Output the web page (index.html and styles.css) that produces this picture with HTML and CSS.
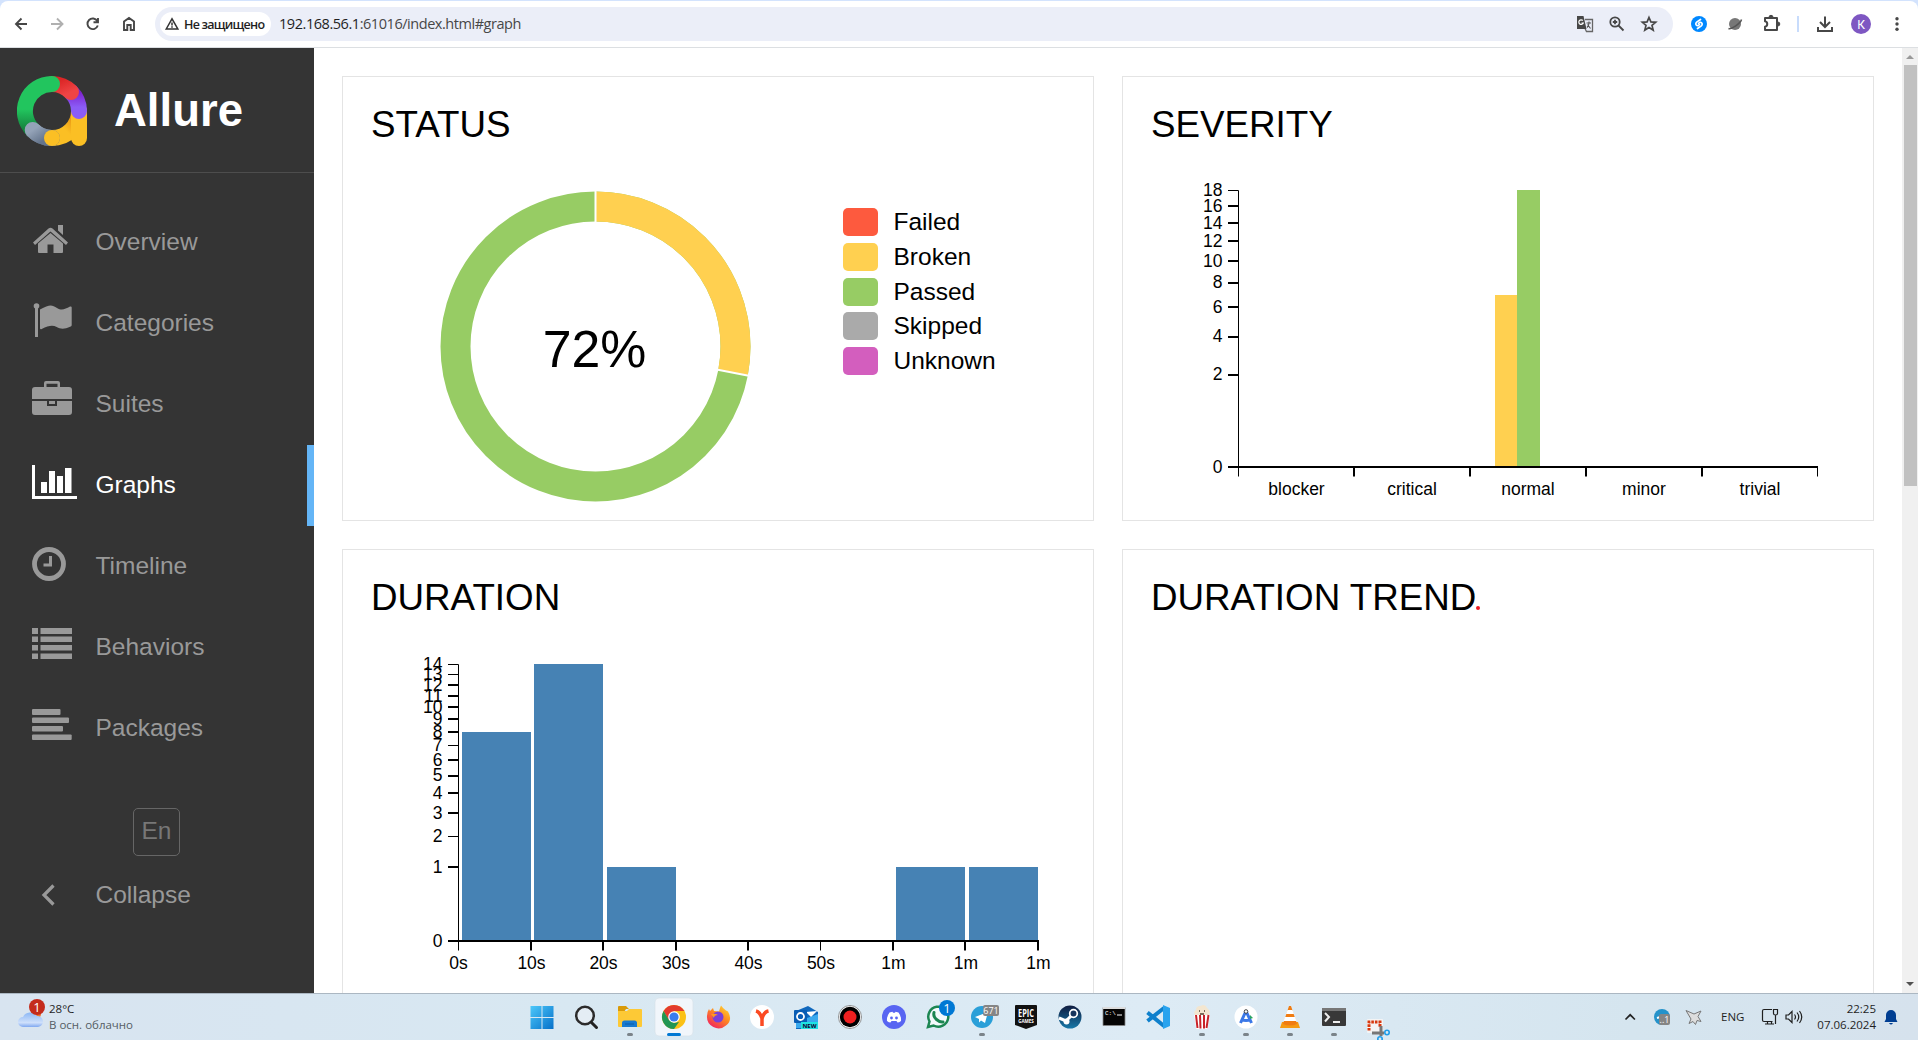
FILE: index.html
```html
<!DOCTYPE html>
<html lang="en">
<head>
<meta charset="utf-8">
<title>Allure Report</title>
<link rel="stylesheet" href="styles.css">
</head>
<body>
<div class="screen">
<header class="toolbar-wrap">
<div class="toolbar">
  <svg class="nav-buttons" width="155" height="46" viewBox="0 1 155 46" fill="none" stroke="#474747" stroke-width="1.9">
    <path d="M27 24H16M21.500 18.500L16 24l5.500 5.500"/>
    <path stroke="#b0b0b0" d="M51 24h11M57 18.500L62.500 24L57 29.500"/>
    <path d="M97.300 21a5.300 5.300 0 1 0 .5 4.500M98 18v4.300h-4.500"/>
    <path d="M124 30V21.500L129 18l5 3.500V30h-3.300v-5h-3.400v5z"/>
  </svg>
  <div class="omnibox">
    <div class="chip">
      <svg width="14" height="14" viewBox="0 0 14 14" fill="none" stroke="#333" stroke-width="1.500"><path d="M1.200 12L7 1.800L12.800 12zM7 5.500v3M7 9.300v1.400"/></svg>
      <span class="chip-text">Не защищено</span>
    </div>
    <span class="url">192.168.56.1<span class="path">:61016/index.html#graph</span></span>
    <svg class="omni-icons" width="96" height="34" viewBox="0 0 96 34" fill="none" stroke="#474747" stroke-width="1.800">
      <path d="M8 12.500h7.500v12H9.500l-1.500-3" stroke="#666" stroke-width="1.300"/><path d="M0 9h6.500l3 13H0z" fill="#474747" stroke="none"/><path d="M5.800 13.500a2.300 2.300 0 1 0 .5 2.500H4.500" stroke="#fff" stroke-width="1.200"/><path d="M9.500 16h4.500M12 14.500V16c0 2-1 3.500-2 4.500M10.500 17.500l3 4" stroke="#555" stroke-width="1.100"/>
      <circle cx="38" cy="15" r="4.700"/><path d="M41.500 18.500l5 5M35.800 15h4.400M38 12.800v4.400"/>
      <path d="M72 10.500l1.900 4.400 4.800.4-3.700 3.100 1.200 4.700-4.200-2.500-4.200 2.500 1.200-4.700-3.700-3.100 4.800-.4z" stroke-width="1.700"/>
    </svg>
  </div>
  <svg class="extensions" width="245" height="46" viewBox="1673 1 245 46" fill="none">
    <circle cx="1699" cy="24" r="8" fill="#08f"/><path d="M1700.500 19.500l-3.800 2.600c-1.700 1.500-.8 3.800 1.200 3.500l1.600-1M1697.500 28.500l3.800-2.600c1.700-1.500.8-3.800-1.200-3.500l-1.600 1" stroke="#fff" stroke-width="1.700" stroke-linecap="round"/>
    <circle cx="1735" cy="24" r="6" fill="#777"/><path d="M1728.500 28.500c3 1 12-5 13-9" stroke="#555" stroke-width="1.500"/>
    <path d="M1765 18h12v12h-12v-3.300c3-.5 3-4.900 0-5.400z" stroke="#474747" stroke-width="2" stroke-linejoin="round"/><path d="M1769 17.300a2 2 0 0 1 4 0M1777.800 22a2 2 0 0 1 0 4" fill="#474747"  stroke="#474747"/>
    <path d="M1798 16v16" stroke="#c8dcfc" stroke-width="2"/>
    <path d="M1825 16.500v10M1820 22l5 5 5-5M1818 27v4h14v-4" stroke="#474747" stroke-width="2"/>
    <circle cx="1861" cy="24" r="10" fill="#7e57c2"/><text x="1861" y="28.500" text-anchor="middle" class="avatar">К</text>
    <g fill="#474747"><circle cx="1897" cy="18.700" r="1.700"/><circle cx="1897" cy="24" r="1.700"/><circle cx="1897" cy="29.300" r="1.700"/></g>
  </svg>
</div>
</header>

<div class="page">
<aside class="sidebar">
  <div class="brand">
    <svg width="70" height="70" viewBox="0 0 70 70" fill="none" stroke-width="16" stroke-linecap="round">
      <defs>
        <linearGradient id="g" x1="0" y1="0" x2="0" y2="1"><stop offset=".55" stop-color="#22c55e"/><stop offset="1" stop-color="#15803d"/></linearGradient>
        <linearGradient id="r" x1="0" y1="0" x2="1" y2="1"><stop offset="0" stop-color="#dc2626"/><stop offset="1" stop-color="#ef4444"/></linearGradient>
        <linearGradient id="p" x1="0" y1="0" x2="0" y2="1"><stop offset="0" stop-color="#7e22ce"/><stop offset=".8" stop-color="#8b5cf6"/></linearGradient>
        <linearGradient id="s" x1="0" y1="0" x2="1" y2=".6"><stop offset="0" stop-color="#94a3b8"/><stop offset="1" stop-color="#64748b"/></linearGradient>
        <linearGradient id="y" x1="0" y1="1" x2="1" y2="0"><stop offset=".4" stop-color="#fbbf24"/><stop offset="1" stop-color="#d97706"/></linearGradient>
      </defs>
      <path stroke="url(#s)" d="M35 62A27 27 0 0 1 15.700 54"/>
      <path stroke="url(#y)" stroke-linecap="butt" d="M62 35A27 27 0 0 1 35 62"/><circle cx="35" cy="62" r="8" fill="#fbbf24" stroke="none"/>
      <path stroke="#fbbf24" d="M62 35V62"/>
      <path stroke="url(#p)" d="M54 16A27 27 0 0 1 62 35"/>
      <path stroke="url(#r)" d="M35 8A27 27 0 0 1 54 16"/>
      <path stroke="url(#g)" d="M15.700 54A27 27 0 0 1 35 8"/>
      <path stroke="url(#s)" d="M35 62A27 27 0 0 1 15.700 54"/>
      <circle cx="35" cy="62" r="8" fill="#fbbf24" stroke="none"/>
    </svg>
    <span class="brand-name">Allure</span>
  </div>
  <nav class="menu">
    <a class="item"><svg class="icon" viewBox="0 0 95 81"><path d="M33 40.500L48.500 26.500q2-1.500 4 0L68 40.500l-2 2.500L50.500 29.500L35 43zM58 23h5v10l-5-4.500zM38 41.500L50.500 31 63 41.500V50q0 1-1 1H53.500V42.500h-6V51H39q-1 0-1-1z"/></svg><span class="label">Overview</span></a>
    <a class="item"><svg class="icon" viewBox="0 0 95 81"><circle cx="36.500" cy="23" r="2.800"/><path d="M35 24h3v30h-3zM40 26.500C50 21 52 22 57 25s8 1 13-1.500q1.700-.5 1.700 1V42q0 1-1 1.500c-7 3-10 2.500-14 .5s-8-1.500-15 2q-1.700.7-1.700-1z"/></svg><span class="label">Categories</span></a>
    <a class="item"><svg class="icon" viewBox="0 0 95 81"><path fill-rule="evenodd" d="M44 23v-4q0-2 2-2h12q2 0 2 2v4h9q3 0 3 3v9H32v-9q0-3 3-3zM46.500 23h11v-3.300h-11zM32 37h15v5h10v-5h15v11q0 3-3 3H35q-3 0-3-3zM49 37h6v3h-6z"/></svg><span class="label">Suites</span></a>
    <a class="item active"><svg class="icon" viewBox="0 0 95 81"><path d="M32 20h3v31h42v3H32zM41 37h6v11h-6zM49 26h6v22h-6zM57 31h6v17h-6zM65 23h6.500v25H65z"/></svg><span class="label">Graphs</span></a>
    <a class="item"><svg class="icon" viewBox="0 0 95 81"><circle cx="49" cy="38" r="14.500" fill="none" stroke="currentColor" stroke-width="4.800"/><path d="M49 30h3v10.500h-8.500v-3H49z"/></svg><span class="label">Timeline</span></a>
    <a class="item"><svg class="icon" viewBox="0 0 95 81"><path d="M32 21h6v6h-6zM40.500 21H72v6H40.500zM32 29.500h6v5.500h-6zM40.500 29.500H72v5.500H40.500zM32 38h6v5.500h-6zM40.500 38H72v5.500H40.500zM32 46.500h6V52h-6zM40.500 46.500H72V52H40.500z"/></svg><span class="label">Behaviors</span></a>
    <a class="item"><svg class="icon" viewBox="0 0 95 81"><g><rect x="32" y="21" width="28.500" height="6" rx="1"/><rect x="32" y="29.500" width="37" height="5.500" rx="1"/><rect x="32" y="38" width="31" height="5.500" rx="1"/><rect x="32" y="46.500" width="39.700" height="5.500" rx="1"/></g></svg><span class="label">Packages</span></a>
  </nav>
  <div class="lang">En</div>
  <a class="item collapse"><svg class="icon" viewBox="0 0 95 81"><path d="M53.500 30.500L44 40l9.500 9.500" fill="none" stroke="currentColor" stroke-width="3.200"/></svg><span class="label">Collapse</span></a>
</aside>

<main class="content">
  <section class="card">
    <h2 class="title">STATUS</h2>
    <div class="status">
      <svg class="donut" width="311" height="311" viewBox="-155.500 -155.500 311 311">
        <g fill="none" stroke-width="30" transform="rotate(-90)">
          <circle r="140" stroke="#97cc64"/>
          <circle r="140" stroke="#ffd050" pathLength="100" stroke-dasharray="28 72"/>
        </g>
        <path d="M0-157V-123M121 23L154.500 29.500" stroke="#fff" stroke-width="2"/>
        <text x="-1" y="20" text-anchor="middle" class="percent">72%</text>
      </svg>
      <ul class="legend">
        <li><i class="swatch failed"></i>Failed</li>
        <li><i class="swatch broken"></i>Broken</li>
        <li><i class="swatch passed"></i>Passed</li>
        <li><i class="swatch skipped"></i>Skipped</li>
        <li><i class="swatch unknown"></i>Unknown</li>
      </ul>
    </div>
  </section>

  <section class="card">
    <h2 class="title">SEVERITY</h2>
    <svg class="chart" width="750" height="359" viewBox="0 0 750 359">
      <path fill="#ffd050" d="M372 134h22v171h-22z"/><path fill="#97cc64" d="M394 29h23v276h-23z"/>
      <g class="axis" stroke-width="2"><path d="M105 45h10M105 62h10M105 80h10M105 100h10M105 122h10M105 146h10M105 176h10M105 214h10M105 306H695M231 306v9.500M347 306v9.500M463 306v9.500M579 306v9.500"/></g>
      <g class="axis" stroke-width="1"><path d="M105 29.500h10.500V315.500M694.500 306v9.500"/></g>
      <g class="tick end"><text x="99.500" y="35">18</text><text x="99.500" y="51">16</text><text x="99.500" y="68">14</text><text x="99.500" y="86">12</text><text x="99.500" y="106">10</text><text x="99.500" y="127">8</text><text x="99.500" y="152">6</text><text x="99.500" y="181">4</text><text x="99.500" y="219">2</text><text x="99.500" y="312">0</text></g>
      <g class="tick mid"><text x="173.500" y="334">blocker</text><text x="289" y="334">critical</text><text x="405" y="334">normal</text><text x="521" y="334">minor</text><text x="637" y="334">trivial</text></g>
    </svg>
  </section>

  <section class="card">
    <h2 class="title">DURATION</h2>
    <svg class="chart" width="750" height="359" viewBox="0 0 750 359">
      <g fill="#4682b4"><path d="M119 98h69v209h-69zM191 30h69v277h-69zM264 233h69v74h-69zM553 233h69v74h-69zM626 233h69v74h-69z"/></g>
      <g class="axis" stroke-width="2"><path d="M105 51h10M105 62h10M105 73h10M105 85h10M105 98h10M105 126h10M105 142h10M105 159h10M105 179h10M105 233h10M105 307H696M188 307v9.500M260 307v9.500M333 307v9.500M405 307v9.500M550 307v9.500M622 307v9.500M695 307v9.500"/></g>
      <g class="axis" stroke-width="1"><path d="M105 30.500h10.500V316.500M105 40.500h10M105 111.500h10M105 202.500h10M477.500 307v9.500"/></g>
      <g class="tick end"><text x="99.500" y="35.500">14</text><text x="99.500" y="45.500">13</text><text x="99.500" y="56.500">12</text><text x="99.500" y="67.500">11</text><text x="99.500" y="78.500">10</text><text x="99.500" y="90.500">9</text><text x="99.500" y="103.500">8</text><text x="99.500" y="116.500">7</text><text x="99.500" y="131.500">6</text><text x="99.500" y="147">5</text><text x="99.500" y="165">4</text><text x="99.500" y="185">3</text><text x="99.500" y="208">2</text><text x="99.500" y="239">1</text><text x="99.500" y="312.500">0</text></g>
      <g class="tick mid"><text x="115.500" y="335">0s</text><text x="188.500" y="335">10s</text><text x="260.500" y="335">20s</text><text x="333" y="335">30s</text><text x="405.500" y="335">40s</text><text x="478" y="335">50s</text><text x="550.500" y="335">1m</text><text x="623" y="335">1m</text><text x="695.500" y="335">1m</text></g>
    </svg>
  </section>

  <section class="card">
    <h2 class="title">DURATION TREND<i class="dot"></i></h2>
  </section>
</main>
<div class="scrollbar">
  <svg width="16" height="17" viewBox="0 0 16 17"><path d="M4 11l4-4 4 4z" fill="#999"/></svg>
  <div class="thumb"></div>
  <svg class="down" width="16" height="17" viewBox="0 0 16 17"><path d="M4 6l4 4 4-4z" fill="#505050"/></svg>
</div>
</div>

<footer class="taskbar">
  <div class="weather">
    <svg width="49" height="46" viewBox="0 994 49 46">
      <defs><linearGradient id="cl" x1="0" y1="0" x2="0" y2="1"><stop offset="0" stop-color="#8db8f5"/><stop offset=".7" stop-color="#cfe0fb"/><stop offset="1" stop-color="#7fa8f0"/></linearGradient></defs>
      <circle cx="36" cy="1014" r="5" fill="#f0752b"/><path d="M23 1027a5 5 0 0 1 0-10a8 7.500 0 0 1 14-1a5.500 5.500 0 0 1 1 11z" fill="url(#cl)"/>
      <circle cx="37" cy="1007" r="8" fill="#c42b1c"/><text x="37" y="1011.500" text-anchor="middle" class="badge">1</text>
    </svg>
    <div class="weather-text"><span class="temp">28°C</span><span class="sky">В осн. облачно</span></div>
  </div>
  <div class="apps">
    <svg class="app" viewBox="0 0 44 46"><defs><linearGradient id="w" x1="0" y1="0" x2="1" y2="1"><stop offset="0" stop-color="#4cc8fa"/><stop offset="1" stop-color="#0670c9"/></linearGradient></defs><path fill="url(#w)" d="M10.500 12h11v11h-11zM22.500 12h11v11h-11zM10.500 24h11v11h-11zM22.500 24h11v11h-11z"/></svg>
    <svg class="app" viewBox="0 0 44 46"><circle cx="21" cy="21.500" r="8.800" fill="#e4edf4" stroke="#2b2b2b" stroke-width="2.500"/><path d="M27.500 28.500l5 5" stroke="#222" stroke-width="3" stroke-linecap="round"/></svg>
    <svg class="app" viewBox="0 0 44 46"><path fill="#d99a08" d="M10 13q0-1 1-1h7l3 3h-3l-2 3h-6z"/><path fill="#fdc936" d="M10 17h9l2-2h12q1 0 1 1v16q0 1-1 1H11q-1 0-1-1z"/><path fill="#1779cf" d="M14 33v-4q0-2.500 2.500-2.500h10q2.500 0 2.500 2.500v4z"/><path stroke="#0d5ca8" d="M17 30h9"/><rect class="run" x="19" y="39" width="6" height="3" rx="1.500"/></svg>
    <svg class="app" viewBox="0 0 44 46"><rect x="3" y="4" width="38" height="38" rx="4" fill="#f1f6fb" stroke="#d8e2ea" stroke-width=".7"/><circle cx="22" cy="23" r="12" fill="#fbc116"/><path fill="#e33b2e" d="M11.600 17A12 12 0 0 1 32.400 17H22L16.800 26z"/><path fill="#219653" d="M11.600 17L17 26l5 3 5-1-5 7A12 12 0 0 1 11.600 17z"/><circle cx="22" cy="23" r="5.800" fill="#fff"/><circle cx="22" cy="23" r="4.600" fill="#3b7ded"/><rect x="15" y="39" width="14" height="3" rx="1.500" fill="#0078d4"/></svg>
    <svg class="app" viewBox="0 0 44 46"><defs><linearGradient id="ff" x1="1" y1="0" x2=".3" y2="1"><stop offset="0" stop-color="#ffe33a"/><stop offset=".5" stop-color="#ff8a1f"/><stop offset="1" stop-color="#f2265d"/></linearGradient></defs><path fill="url(#ff)" d="M11 22q0-4 2-7l1 2 3-3 1 3 5 .5q1-4 2-6 2 3 5 5l2 1q5 9-2 14a11.500 11.500 0 0 1-19-9.500z"/><circle cx="22" cy="23" r="5.500" fill="#7a3fd8"/><path d="M15 20q4-1 7 1-4 0-4 3z" fill="#ff9a20"/></svg>
    <svg class="app" viewBox="0 0 44 46"><circle cx="22" cy="23" r="12" fill="#fff"/><path d="M16 17q4 1 6 7.500V32M28.500 17q-5 1-6.500 8" fill="none" stroke="#fb4a22" stroke-width="3.500"/></svg>
    <svg class="app" viewBox="0 0 44 46"><path fill="#1068bd" d="M12 17L24 12l10 6v14l-4 3H12z"/><path fill="#39a9ee" d="M12 28l22-8v12q0 2-2 2H12z"/><path fill="#fff" d="M22 18l11-1-6 6z"/><rect x="10" y="16" width="13" height="13" rx="1" fill="#0a5eb5"/><circle cx="16.500" cy="22.500" r="3.500" fill="none" stroke="#fff" stroke-width="1.800"/><rect x="17" y="28" width="17" height="7" fill="#1ee2e2"/><text x="25.500" y="34" text-anchor="middle" class="new">NEW</text></svg>
    <svg class="app" viewBox="0 0 44 46"><circle cx="22" cy="23" r="11.500" fill="#fff" stroke="#666" stroke-width=".7"/><circle cx="22" cy="23" r="10.200"/><circle cx="22" cy="23" r="6.500" fill="#f02020"/></svg>
    <svg class="app" viewBox="0 0 44 46"><circle cx="22" cy="23" r="12" fill="#5865f2"/><path fill="#fff" d="M17.500 18.500l3-.7.5 1h2l.5-1 3 .7q3 4 2.500 8.500-2 1.500-3.500 1.500l-1-1.500h-5l-1 1.500q-1.500 0-3.500-1.500-.5-4.500 2.500-8.500z"/><circle cx="19.500" cy="24" r="1.400" fill="#5865f2"/><circle cx="24.500" cy="24" r="1.400" fill="#5865f2"/></svg>
    <svg class="app" viewBox="0 0 44 46"><path d="M12 33l1.500-5.500a10 10 0 1 1 4 4z" fill="#f4fafc" stroke="#1c8652" stroke-width="2.500"/><path d="M18 18.500q-1 4 2.500 7t6.500 2.500" fill="none" stroke="#1c8652" stroke-width="3" stroke-linecap="round"/><circle cx="31" cy="14" r="8" fill="#0078d4"/><text x="31" y="18.500" text-anchor="middle" class="badge">1</text></svg>
    <svg class="app" viewBox="0 0 44 46"><circle cx="22" cy="23" r="11" fill="#2a9fd8"/><path fill="#fff" d="M15 23l13-5-3 11-4-2.500-2 2v-3.500z"/><rect x="23" y="11" width="16" height="11" rx="2" fill="#858585"/><text x="31" y="20" text-anchor="middle" class="count">671</text><rect class="run" x="19" y="39" width="6" height="3" rx="1.500"/></svg>
    <svg class="app" viewBox="0 0 44 46"><path d="M11 12q0-1 1-1h20q1 0 1 1v19L22 35 11 31z" fill="#111"/><text x="22" y="23" text-anchor="middle" class="epic" textLength="16" lengthAdjust="spacingAndGlyphs">EPIC</text><text x="22" y="28.500" text-anchor="middle" class="games">GAMES</text></svg>
    <svg class="app" viewBox="0 0 44 46"><defs><linearGradient id="st" x1="0" y1="0" x2="0" y2="1"><stop offset="0" stop-color="#101c40"/><stop offset="1" stop-color="#1778a8"/></linearGradient></defs><circle cx="22" cy="23" r="11.500" fill="url(#st)"/><path d="M11 24l7 3 6-6" fill="none" stroke="#fff" stroke-width="3"/><circle cx="25.500" cy="19.500" r="3.800" fill="#16345c" stroke="#fff" stroke-width="1.700"/><circle cx="18.500" cy="27.500" r="3" fill="#fff"/></svg>
    <svg class="app" viewBox="0 0 44 46"><path fill="#050505" stroke="#888" stroke-width=".8" d="M11 13.500h22v18H11z"/><path fill="#ddd" d="M11 13h22v2H11z"/><text x="13" y="21" class="cmd">C:\</text><path d="M25 21h5" stroke="#fff"/></svg>
    <svg class="app" viewBox="0 0 44 46"><path d="M11.500 27L28 14M11.500 18.500L28 32" stroke="#0f80cc" stroke-width="4"/><path fill="#29a3ee" d="M27 11l7 3v18l-7 3z"/></svg>
    <svg class="app" viewBox="0 0 44 46"><path fill="#f3e6d0" d="M15 21q-2-3 1-5 0-4 4-4l3-1q3 0 4 3 4 3 2 7z"/><path fill="#fff" d="M14 21h16l-2.500 14h-11z"/><path d="M16 21l1.500 13M20 21l.5 13.500M24 21v13.500M28.500 21l-2 13" stroke="#c92228" stroke-width="2"/><path d="M19 17h1M24 17h1M20 20h4" stroke="#543" stroke-width="1.500"/><rect class="run" x="19" y="39" width="6" height="3" rx="1.500"/></svg>
    <svg class="app" viewBox="0 0 44 46"><circle cx="22" cy="23" r="11.500" fill="#fff"/><path d="M22 17l-5.500 12M22 17l5.500 12M17 25.500q5 2 10 0" fill="none" stroke="#3b78e7" stroke-width="3"/><circle cx="22" cy="17.500" r="1.800" fill="#fff" stroke="#444"/><path d="M26 21l3 3-3 1z" fill="#2aa563"/><rect class="run" x="19" y="39" width="6" height="3" rx="1.500"/></svg>
    <svg class="app" viewBox="0 0 44 46"><path fill="#f59a13" d="M14 28h16l2 6H12z"/><path fill="#f07c12" d="M21 12h2l6 18q-7 3-14 0z"/><path fill="#fff" d="M19.500 16h5l1.500 4h-8zM17 23h10l1.500 4h-13z"/><rect class="run" x="19" y="39" width="6" height="3" rx="1.500"/></svg>
    <svg class="app" viewBox="0 0 44 46"><rect x="10" y="14" width="24" height="18" rx="1" fill="#383838"/><path fill="#777" d="M10 14h24v3H10z"/><path d="M13 19l4 4-4 4.500M21 28h7" fill="none" stroke="#eee" stroke-width="2"/><rect class="run" x="19" y="39" width="6" height="3" rx="1.500"/></svg>
    <svg class="app" viewBox="0 0 44 46"><rect x="11" y="25" width="16" height="14" rx="1" fill="#f4f4f4"/><path d="M13 36.500V28h11v5" fill="none" stroke="#d8380f" stroke-width="3" stroke-dasharray="2.600 1"/><path d="M16 39h12M25 32v10" stroke="#777" stroke-width="3"/><circle cx="31" cy="38.500" r="2.200" fill="none" stroke="#209ce8" stroke-width="1.600"/><circle cx="24" cy="45" r="2.200" fill="none" stroke="#209ce8" stroke-width="1.600"/></svg>
  </div>
  <div class="tray">
    <svg width="100" height="46" viewBox="1621 994 100 46" fill="none">
      <path d="M1625.500 1019.500l4.700-4.700 4.700 4.700" stroke="#222" stroke-width="1.700"/>
      <circle cx="1662" cy="1017" r="8" fill="#2492ca"/><path d="M1657 1018l5-1.500" stroke="#fff" stroke-width="2"/><rect x="1659" y="1014" width="11" height="11" rx="2" fill="#858585"/><text x="1664.500" y="1023" text-anchor="middle" class="count">..1</text>
      <path d="M1686 1010.500l8 3.500 7-3-3 5.500 3 5-4-1-1.500 4-2.500-3-4 2 2-4.500z" fill="#ddd" stroke="#777"/>
    </svg>
    <span class="input-lang">ENG</span>
    <svg width="60" height="46" viewBox="1750 994 60 46" fill="none" stroke="#1f1f1f" stroke-width="1.200">
      <path d="M1772 1009.500h-8q-1.500 0-1.500 1.500v9q0 1.500 1.500 1.500h8.500M1767.500 1021.500v2.500M1771.500 1021.500v2.500M1765 1024h9M1773.500 1009.500h4v4q0 1.500-2 1.500t-2-1.500zM1775.500 1015v9"/>
      <path d="M1786 1015h2.500l3.500-3.500v11l-3.500-3.500H1786zM1794.500 1014.500q2 2.500 0 5M1797 1012.500q3.500 4.500 0 9M1799.500 1011q4.500 6 0 12"/>
    </svg>
    <div class="clock"><span>22:25</span><span>07.06.2024</span></div>
    <svg width="42" height="46" viewBox="1876 994 42 46"><path d="M1884.500 1022l1.500-3v-4a5 5 0 0 1 10 0v4l1.500 3zM1889 1023h4q-2 3-4 0z" fill="#003e92"/></svg>
  </div>
</footer>
</div>
</body>
</html>
```
FILE: styles.css
```css
* { box-sizing: border-box; }
body { margin: 0; background: #fff; font-family: "Liberation Sans", Arial, sans-serif; }
.screen { width: 1918px; height: 1040px; display: flex; flex-direction: column; overflow: hidden; }

.toolbar-wrap { flex: none; height: 48px; padding-top: 1px; background: #d3e3fd; border-bottom: 1px solid #dcdfe2; }
.toolbar { height: 46px; display: flex; align-items: center; background: #fff; border-radius: 8px 8px 0 0; }
.nav-buttons, .extensions { flex: none; display: block; }
.omnibox { flex: 1; height: 34px; display: flex; align-items: center; padding-left: 5px; border-radius: 17px; background: #ebeef8; }
.chip { width: 111px; height: 24px; display: flex; align-items: center; gap: 5px; padding-left: 5px; border-radius: 12px; background: #fff; }
.chip-text { font: 600 12.5px "Open Sans", "Noto Sans", sans-serif; letter-spacing: -0.75px; color: #1f1f1f; white-space: nowrap; }
.url { margin-left: 8px; flex: 1; padding-bottom: 1px; font: 14px "Open Sans", "Noto Sans", sans-serif; letter-spacing: -0.63px; letter-spacing: -0.45px; color: #1f1f1f; font-size: 14.5px; }
.path { color: #474747; }
.omni-icons { flex: none; }
.avatar { font: 12px Roboto, sans-serif; fill: #fff; }

.page { flex: none; height: 945px; display: flex; overflow: hidden; }
.sidebar { flex: none; width: 314px; background: #343434; color: #999; }
.brand { height: 125px; display: flex; align-items: center; gap: 27px; padding: 2px 0 0 17px; border-bottom: 1px solid #4d4d4d; }
.brand-name { font-size: 45.5px; font-weight: bold; color: #fff; }
.menu { padding-top: 29px; }
.item { height: 81px; display: flex; align-items: center; font-size: 24.5px; }
.icon { flex: none; width: 95px; height: 81px; fill: currentColor; }
.label { padding: 0 0 2px 0.5px; }
.active { color: #fff; border-right: 7px solid #64b5f6; }
.lang { width: 47px; height: 48px; margin: 39px 0 0 133px; border: 1px solid #666; border-radius: 5px; color: #777; font-size: 24.5px; line-height: 44px; text-align: center; }
.collapse { margin-top: -1px; }

.content { flex: 1; padding: 28px; display: grid; grid-template-columns: 752px 752px; grid-auto-rows: 445px; gap: 28px; }
.card { border: 1px solid #e4e4e4; background: #fff; }
.title { height: 84px; margin: 0; padding: 27px 0 0 28px; font-size: 36.75px; font-weight: normal; line-height: 42px; color: #000; white-space: nowrap; }
.dot { display: inline-block; width: 4px; height: 4px; border-radius: 2px; background: #ed1c24; }
.chart { display: block; }
.status { display: flex; padding: 30px 0 0 97px; align-items: flex-start; }
.percent { font-size: 51.8px; }
.legend { list-style: none; margin: 17px 0 0 92px; padding: 0; font-size: 24.5px; line-height: 27px; }
.legend li { display: flex; gap: 15.5px; height: 34.75px; }
.swatch { width: 35px; height: 28px; border-radius: 5px; }
.failed { background: #fd5a3e; }
.broken { background: #ffd050; }
.passed { background: #97cc64; }
.skipped { background: #aaa; }
.unknown { background: #d35ebe; }
.axis { fill: none; stroke: #000; }
.tick { font-size: 17.5px; fill: #000; }
.end { text-anchor: end; }
.mid { text-anchor: middle; }

.scrollbar { flex: none; width: 16px; display: flex; flex-direction: column; align-items: center; background: #f0f0f0; }
.scrollbar svg { flex: none; display: block; }
.thumb { width: 13px; height: 421px; background: #c1c1c1; }
.down { margin-top: auto; }

.taskbar { flex: none; height: 47px; display: flex; border-top: 1px solid #abb7c2; background: linear-gradient(90deg, #d8e4f0, #d8e8f2 30%, #ddebf5 60%, #d5e5ef 85%, #d6e2ed); font-family: "Open Sans", "Noto Sans", sans-serif; }
.weather { width: 520px; display: flex; }
.weather-text, .clock { display: flex; flex-direction: column; justify-content: center; font-size: 11.5px; line-height: 16px; color: #1f1f1f; }
.temp { letter-spacing: 0; }
.sky { color: #555d64; }
.apps { display: flex; }
.app { width: 44px; height: 46px; flex: none; overflow: hidden; }
.run { fill: #7b8389; }
.badge { font: 13px "Open Sans", sans-serif; fill: #fff; }
.count { font: 9px "Open Sans", sans-serif; fill: #fff; }
.new { font: bold 6px "Open Sans", sans-serif; fill: #103; }
.epic { font: bold 11px "Open Sans", sans-serif; fill: #fff; }
.games { font: bold 4.5px "Open Sans", sans-serif; fill: #fff; }
.cmd { font: 6px "Liberation Mono", monospace; fill: #fff; }
.tray { margin-left: auto; display: flex; align-items: center; }
.input-lang { width: 29px; font-size: 11.5px; line-height: 16px; color: #1f1f1f; }
.clock { width: 66px; align-items: flex-end; white-space: nowrap; }
```
